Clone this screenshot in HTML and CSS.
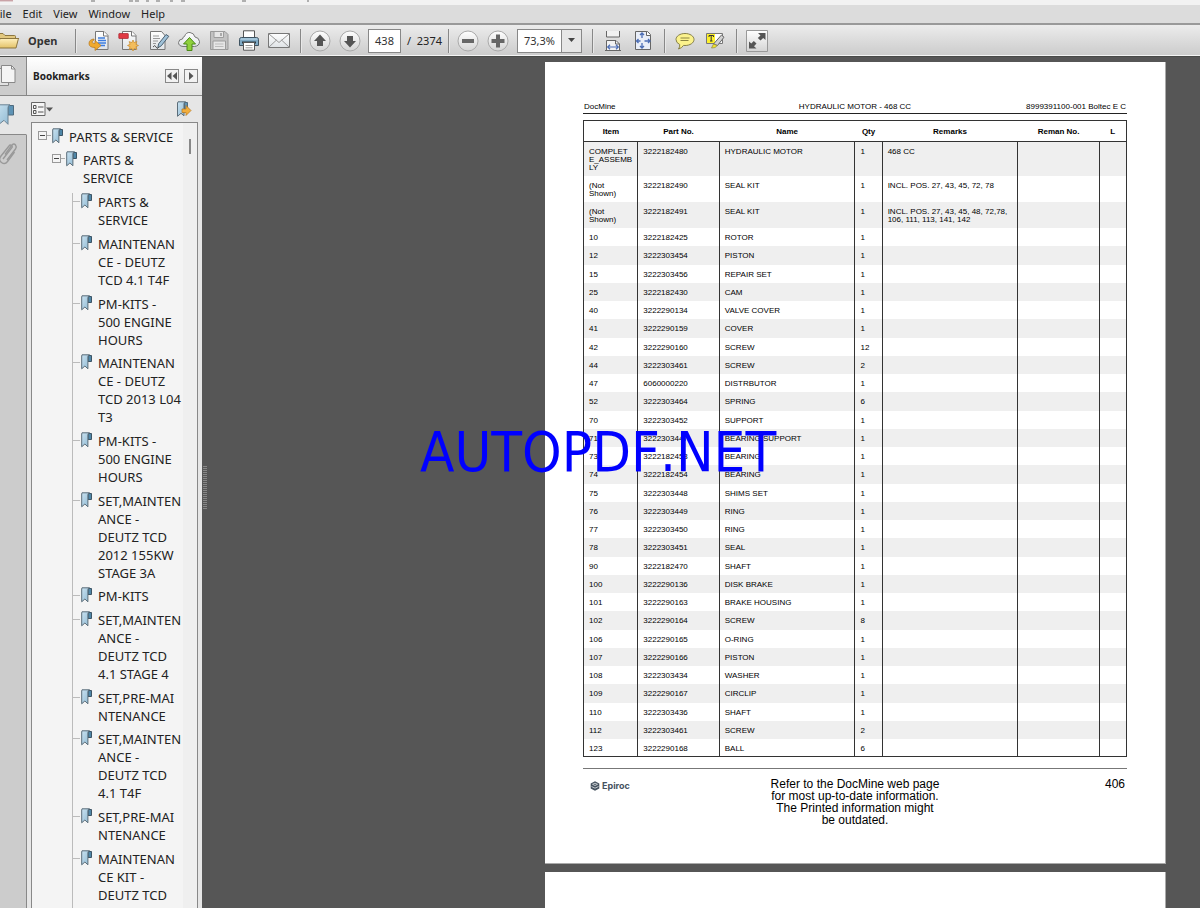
FILE: index.html
```html
<!DOCTYPE html>
<html lang="en">
<head>
<meta charset="utf-8">
<title>PDF viewer</title>
<link rel="stylesheet" href="styles.css">
</head>
<body>
<svg class="defs" aria-hidden="true">
  <defs>
    <linearGradient id="blue" x1="0" y1="0" x2="1" y2="1"><stop offset="0" stop-color="#c9e2f0"/><stop offset="1" stop-color="#8fb9d3"/></linearGradient>
    <linearGradient id="paper" x1="0" y1="0" x2="0" y2="1"><stop offset="0" stop-color="#fff"/><stop offset="1" stop-color="#dfe3e6"/></linearGradient>
    <linearGradient id="knob" x1="0" y1="0" x2="0" y2="1"><stop offset="0" stop-color="#fff"/><stop offset="1" stop-color="#d4d4d4"/></linearGradient>
    <linearGradient id="gold" x1="0" y1="0" x2="0" y2="1"><stop offset="0" stop-color="#fff0bd"/><stop offset="1" stop-color="#e3c268"/></linearGradient>
    <symbol id="mark" viewBox="0 0 12 16">
      <path d="M8 1.500h3.500v6H8z" fill="#4f87a8" stroke="#3d5566"/>
      <path d="M2 .8h7.500q-1.600.4-1.600 2v12L4.900 12l-3.200 2.800V2z" fill="url(#blue)" stroke="#5b6d79"/>
    </symbol>
  </defs>
</svg>
<div class="app">
  <div class="titlebar" aria-hidden="true">
    <svg width="320" height="5"><path d="M0 .8h13" stroke="#b98288"/><path d="M91 1h4M129 1h4m2 0h4m7 0h3m7 0h4m10 0h3m8 0h4m57 0h4M308 0v2" stroke="#999" stroke-width="1.500"/></svg>
  </div>
  <nav class="menubar" aria-label="Main">
    <button>File</button><button>Edit</button><button>View</button><button>Window</button><button>Help</button>
  </nav>
  <div class="toolbar">
    <button class="open"><svg width="20" height="20" viewBox="0 0 20 20"><path d="M-6 16V3.500q0-1 1-1H3l2 2h9.500q1 0 1 1V16z" fill="#e2c87f" stroke="#8d7740"/><path d="M-3 17L0 7.500h19q-.5 0-.8 1L16 17z" fill="url(#gold)" stroke="#8d7740"/></svg><span>Open</span></button>
    <span class="sep"></span>
    <button class="tool" aria-label="Convert"><svg viewBox="0 0 22 22"><path d="M7.500 1.500h8.500l4 4v14H7.500z" fill="url(#paper)" stroke="#777"/><path d="M15.500 1.500V6H20" fill="#fff" stroke="#777"/><path d="M10 8h7M10 10.500h8M10 13h8M11 15.500h6" stroke="#3d7de0" stroke-width="1.500"/><path d="M6 9q-5 .5-5 4.500 0 4 6 4v3l6-5-6-5v3q-3 0-3-1.500Q4 11 6 10z" fill="#f0a92d" stroke="#b5761b" stroke-width=".7"/></svg></button>
    <button class="tool" aria-label="Create PDF"><svg viewBox="0 0 22 22"><path d="M4.500 1.500h9.500l4 4v14H4.500z" fill="url(#paper)" stroke="#777"/><path d="M13.500 1.500V6H18" fill="#fff" stroke="#777"/><rect x=".8" y="3.500" width="9.500" height="5" rx=".5" fill="#e03a44" stroke="#a8242f" stroke-width=".7"/><path d="M15 10l1.200 2.600 2.700-1-1 2.700 2.600 1.200-2.600 1.200 1 2.700-2.700-1L15 21l-1.200-2.600-2.700 1 1-2.700-2.600-1.200 2.600-1.200-1-2.700 2.700 1z" fill="#f3bd5c" stroke="#c88a2b" stroke-width=".7"/></svg></button>
    <button class="tool" aria-label="Sign"><svg viewBox="0 0 22 22"><path d="M2.500 1.500h11l3.500 4v14H2.500z" fill="url(#paper)" stroke="#777"/><path d="M5 6h6M5 8.500h7M5 11h5M5 13.500h3" stroke="#999"/><path d="M18 4.500l2.800 1.800-7.500 9.500-3.500 2 .8-4z" fill="#9fc1d8" stroke="#4b6172"/><path d="M5 17q2-3 3 0t3 0" fill="none" stroke="#555"/></svg></button>
    <button class="tool" aria-label="Upload"><svg viewBox="0 0 22 22"><path d="M5 16.500Q.5 16 .5 12.500 1 9 4.500 9 4.500 7 6.500 6.500 8 2 12 2.500q4 .5 5 4.500 4 .5 4.500 4.500 0 4.500-5 5z" fill="url(#paper)" stroke="#777"/><path d="M11.500 7.500l6 6.500h-3.500v6.500h-5V14H5.500z" fill="#8fd03c" stroke="#4b8a17"/></svg></button>
    <button class="tool" aria-label="Save"><svg viewBox="0 0 22 22"><path d="M2.500 1.500h14.500l3 3v15H2.500z" fill="#c2c2c2" stroke="#999"/><path d="M6 1.500h9.500v6H6zM5 11h12.500v8.500H5z" fill="#e6e6e6" stroke="#9c9c9c"/><path d="M12 3h2v3h-2z" fill="#aaa"/><path d="M7 14h8.500M7 16.500h8.500" stroke="#bbb"/></svg></button>
    <button class="tool" aria-label="Print"><svg viewBox="0 0 22 22"><path d="M5.500 8V.8h11V8" fill="#fff" stroke="#555"/><path d="M1.500 15.500v-6q0-2 2-2h15q2 0 2 2v6z" fill="#7fa9c4" stroke="#3f5361"/><path d="M2.500 9h17" stroke="#c7deec"/><path d="M4 12.500h14" stroke="#2b3942" stroke-width="2"/><path d="M5.500 12.500h11v7.700h-11z" fill="#fff" stroke="#555"/><path d="M7.500 15.500h7M7.500 17.800h7" stroke="#999"/></svg></button>
    <button class="tool" aria-label="Email"><svg viewBox="0 0 22 22"><path d="M.5 3.500h21v14H.5z" fill="url(#paper)" stroke="#777"/><path d="M.5 17.500l8-7.500M21.500 17.500l-8-7.500M1 4l10 8.500L21 4" fill="none" stroke="#999"/></svg></button>
    <span class="sep"></span>
    <button class="tool" aria-label="Previous page"><svg viewBox="0 0 22 22"><circle cx="11" cy="11" r="10" fill="url(#knob)" stroke="#aaa"/><path d="M11 4.500l6 6.500h-3v5H8v-5H5z" fill="#555"/></svg></button>
    <button class="tool" aria-label="Next page"><svg viewBox="0 0 22 22"><circle cx="11" cy="11" r="10" fill="url(#knob)" stroke="#aaa"/><path d="M11 17.500l6-6.500h-3V6H8v5H5z" fill="#555"/></svg></button>
    <input class="pageno" aria-label="Page" value="438"><span class="total">/&nbsp; 2374</span>
    <span class="sep"></span>
    <button class="tool" aria-label="Zoom out"><svg viewBox="0 0 22 22"><circle cx="11" cy="11" r="10" fill="url(#knob)" stroke="#aaa"/><path d="M5 9h12v4H5z" fill="#666"/></svg></button>
    <button class="tool" aria-label="Zoom in"><svg viewBox="0 0 22 22"><circle cx="11" cy="11" r="10" fill="url(#knob)" stroke="#aaa"/><path d="M4.500 9H9V4.500h4V9h4.500v4H13v4.500H9V13H4.500z" fill="#666"/></svg></button>
    <div class="combo"><input aria-label="Zoom level" value="73,3%"><button aria-label="Zoom levels"><svg width="8" height="5"><path d="M0 0h7L3.500 4z" fill="#444"/></svg></button></div>
    <span class="sep"></span>
    <button class="tool" aria-label="Fit width"><svg viewBox="0 0 22 22"><path d="M4.500 1v6h13V1M4.500 20.500v-10H14l3.500 3.500v6.500" fill="#f2f2f2" stroke="#666"/><path d="M13.500 10.500V14h4" fill="none" stroke="#666"/><path d="M5.500 17h11M8 14.800L5.700 17 8 19.200M14 14.800l2.300 2.200-2.300 2.200" fill="none" stroke="#4b6db5" stroke-width="1.200"/><path d="M3 20.500h16" stroke="#666"/></svg></button>
    <button class="tool" aria-label="Fit page"><svg viewBox="0 0 22 22"><path d="M3.500 1.500h12l3 3v15h-15z" fill="#e9eef8" stroke="#666"/><path d="M14.500 1.500v4h4" fill="#fff" stroke="#666"/><path d="M10 3v5M10 13v5M4.500 11h4M12.500 11H18M8 5l2-2 2 2M8 16l2 2 2-2M6.500 9l-2 2 2 2M16 9l2 2-2 2" fill="none" stroke="#4b6db5" stroke-width="1.300"/></svg></button>
    <span class="sep"></span>
    <button class="tool" aria-label="Comment"><svg viewBox="0 0 22 22"><path d="M11 3.500c5 0 9 2.600 9 6s-4 6-9 6l-1.500-.1Q8 18 4.500 19q1.500-2 1.200-4.500Q2 12.800 2 9.500c0-3.400 4-6 9-6z" fill="#fbf28c" stroke="#857f49"/><path d="M6.500 8h9M6.500 10.500h8" stroke="#8b8442"/></svg></button>
    <button class="tool" aria-label="Highlight"><svg viewBox="0 0 22 22"><path d="M2.500 3.500h16v10h-16z" fill="#fff" stroke="#777"/><path d="M3 4h8v9H3z" fill="#fdf02c"/><path d="M5 7V5.500h4.500V7M7.200 5.500V11M6 11h2.500" fill="none" stroke="#333"/><path d="M17.500 5l2.500 2.200-6.500 8.300-4-1.500z" fill="#d2d2d2" stroke="#666"/><path d="M9.500 14l3.800 1.600-2.300 2-3.500.4z" fill="#f3e32b" stroke="#8b8442" stroke-width=".7"/></svg></button>
    <span class="sep"></span>
    <button class="tool" aria-label="Read mode"><svg viewBox="0 0 22 22"><path d="M.5.500h21v21H.5z" fill="url(#knob)" stroke="#999"/><path d="M12 3h7.500v7l-2.300-2-2.700 2.500L11.800 8l2.700-2.600zM10.500 18.500H3v-7l2.300 2L7.800 11l2.700 2.600-2.500 2.600z" fill="#555"/></svg></button>
  </div>
  <div class="workspace">
    <aside class="rail">
      <button class="thumbs" aria-label="Page thumbnails"><svg width="18" height="24" viewBox="0 0 18 24"><path d="M-2 4.500h10.500v17H-2z" fill="#e2e2e2" stroke="#888"/><path d="M1.500 1.500h10l3.500 3.500v13.500H1.500z" fill="#f4f4f4" stroke="#888"/><path d="M11.500 1.500V5H15" fill="none" stroke="#888"/></svg></button>
      <button class="marks" aria-label="Bookmarks"><svg width="15" height="22" viewBox="0 0 15 22"><path d="M8 1.500h5.500v9.500H8z" fill="#5e93b5" stroke="#4f6b7e"/><path d="M-4 .8H10q-2 .5-2 3v16.500l-4-4-5 4z" fill="url(#blue)" stroke="#6b8394"/></svg></button>
      <button class="clips" aria-label="Attachments"><svg width="18" height="24" viewBox="0 0 18 24"><g fill="none" stroke="#999" stroke-width="1.400"><path d="M3 17L11.500 6q1.500-1.500 0-2.500t-2.500.5L1 14q-3 4 .5 6.500t6-1L14.500 10"/><path d="M5 12.500L12 3q2-2 3.500 0t0 4L7 18"/></g></svg></button>
    </aside>
    <section class="panel">
      <header><h2>Bookmarks</h2><button aria-label="Collapse"><svg width="12" height="10"><path d="M5.500 1v8L1 5zM11 1v8L6.500 5z" fill="#555"/></svg></button><button aria-label="Next"><svg width="12" height="10"><path d="M4 1v8l4.500-4z" fill="#555"/></svg></button></header>
      <div class="paneltools">
        <button aria-label="Options"><svg width="22" height="15" viewBox="0 0 22 15"><path d="M.5.500h13.500v13H.5z" fill="#f5f5f5" stroke="#666"/><path d="M2.500 3.500h2.500v3H2.500zM2.500 8.500h2.500v3H2.500zM7 5h5.500M7 10h5.500" fill="none" stroke="#555"/><path d="M15 5.500h7l-3.500 4z" fill="#555"/></svg></button>
        <button aria-label="Locate bookmark"><svg width="16" height="17" viewBox="0 0 16 17"><path d="M8.500 1.500h3v7h-3z" fill="#5e93b5" stroke="#4f6b7e"/><path d="M2 .8h7.500q-1.500.5-1.500 2v12l-3-2.500-3.500 3V2z" fill="url(#blue)" stroke="#5b6d79"/><path d="M6 8h4V4.500l5 5-5 5V11.500H6z" fill="#f2ae3c" stroke="#b5761b" stroke-width=".7"/></svg></button>
      </div>
      <div class="treebox">
        <ul class="tree">
          <li><div class="node root"><button class="toggle" aria-label="Collapse"></button><svg class="mark"><use href="#mark"/></svg><a href="#p">PARTS &amp; SERVICE</a></div>
            <ul class="level1">
              <li><div class="node"><button class="toggle" aria-label="Collapse"></button><svg class="mark"><use href="#mark"/></svg><a href="#p">PARTS &amp;<br>SERVICE</a></div>
                <ul class="level2">
                  <li class="node"><svg class="mark"><use href="#mark"/></svg><a href="#p">PARTS &amp;<br>SERVICE</a></li>
                  <li class="node"><svg class="mark"><use href="#mark"/></svg><a href="#p">MAINTENAN<br>CE - DEUTZ<br>TCD 4.1 T4F</a></li>
                  <li class="node"><svg class="mark"><use href="#mark"/></svg><a href="#p">PM-KITS -<br>500 ENGINE<br>HOURS</a></li>
                  <li class="node"><svg class="mark"><use href="#mark"/></svg><a href="#p">MAINTENAN<br>CE - DEUTZ<br>TCD 2013 L04<br>T3</a></li>
                  <li class="node"><svg class="mark"><use href="#mark"/></svg><a href="#p">PM-KITS -<br>500 ENGINE<br>HOURS</a></li>
                  <li class="node"><svg class="mark"><use href="#mark"/></svg><a href="#p">SET,MAINTEN<br>ANCE -<br>DEUTZ TCD<br>2012 155KW<br>STAGE 3A</a></li>
                  <li class="node"><svg class="mark"><use href="#mark"/></svg><a href="#p">PM-KITS</a></li>
                  <li class="node"><svg class="mark"><use href="#mark"/></svg><a href="#p">SET,MAINTEN<br>ANCE -<br>DEUTZ TCD<br>4.1 STAGE 4</a></li>
                  <li class="node"><svg class="mark"><use href="#mark"/></svg><a href="#p">SET,PRE-MAI<br>NTENANCE</a></li>
                  <li class="node"><svg class="mark"><use href="#mark"/></svg><a href="#p">SET,MAINTEN<br>ANCE -<br>DEUTZ TCD<br>4.1 T4F</a></li>
                  <li class="node"><svg class="mark"><use href="#mark"/></svg><a href="#p">SET,PRE-MAI<br>NTENANCE</a></li>
                  <li class="node"><svg class="mark"><use href="#mark"/></svg><a href="#p">MAINTENAN<br>CE KIT -<br>DEUTZ TCD</a></li>
                </ul>
              </li>
            </ul>
          </li>
        </ul>
        <div class="scroll"><span></span></div>
      </div>
    </section>
    <main class="viewer">
      <div class="grip"></div>
      <div class="pages">
        <article class="page" id="p">
          <header class="pagehead"><span>DocMine</span><span>HYDRAULIC MOTOR - 468 CC</span><span class="num">8999391100-001 Boltec E C</span></header>
          <table class="parts">
            <colgroup><col class="c10"><col class="c15"><col class="c25"><col class="c5"><col class="c25"><col class="c15"><col class="c5"></colgroup>
            <thead><tr><th>Item<th>Part No.<th>Name<th>Qty<th>Remarks<th>Reman No.<th>L</thead>
            <tbody>
            <tr class="three"><td>COMPLET<br>E_ASSEMB<br>LY<td>3222182480<td>HYDRAULIC MOTOR<td>1<td>468 CC<td><td>
            <tr class="two"><td>(Not<br>Shown)<td>3222182490<td>SEAL KIT<td>1<td>INCL. POS. 27, 43, 45, 72, 78<td><td>
            <tr class="two"><td>(Not<br>Shown)<td>3222182491<td>SEAL KIT<td>1<td>INCL. POS. 27, 43, 45, 48, 72,78,<br>106, 111, 113, 141, 142<td><td>
            <tr><td>10<td>3222182425<td>ROTOR<td>1<td><td><td>
            <tr><td>12<td>3222303454<td>PISTON<td>1<td><td><td>
            <tr><td>15<td>3222303456<td>REPAIR SET<td>1<td><td><td>
            <tr><td>25<td>3222182430<td>CAM<td>1<td><td><td>
            <tr><td>40<td>3222290134<td>VALVE COVER<td>1<td><td><td>
            <tr><td>41<td>3222290159<td>COVER<td>1<td><td><td>
            <tr><td>42<td>3222290160<td>SCREW<td>12<td><td><td>
            <tr><td>44<td>3222303461<td>SCREW<td>2<td><td><td>
            <tr><td>47<td>6060000220<td>DISTRBUTOR<td>1<td><td><td>
            <tr><td>52<td>3222303464<td>SPRING<td>6<td><td><td>
            <tr><td>70<td>3222303452<td>SUPPORT<td>1<td><td><td>
            <tr><td>71<td>3222303447<td>BEARING SUPPORT<td>1<td><td><td>
            <tr><td>73<td>3222182453<td>BEARING<td>1<td><td><td>
            <tr><td>74<td>3222182454<td>BEARING<td>1<td><td><td>
            <tr><td>75<td>3222303448<td>SHIMS SET<td>1<td><td><td>
            <tr><td>76<td>3222303449<td>RING<td>1<td><td><td>
            <tr><td>77<td>3222303450<td>RING<td>1<td><td><td>
            <tr><td>78<td>3222303451<td>SEAL<td>1<td><td><td>
            <tr><td>90<td>3222182470<td>SHAFT<td>1<td><td><td>
            <tr><td>100<td>3222290136<td>DISK BRAKE<td>1<td><td><td>
            <tr><td>101<td>3222290163<td>BRAKE HOUSING<td>1<td><td><td>
            <tr><td>102<td>3222290164<td>SCREW<td>8<td><td><td>
            <tr><td>106<td>3222290165<td>O-RING<td>1<td><td><td>
            <tr><td>107<td>3222290166<td>PISTON<td>1<td><td><td>
            <tr><td>108<td>3222303434<td>WASHER<td>1<td><td><td>
            <tr><td>109<td>3222290167<td>CIRCLIP<td>1<td><td><td>
            <tr><td>110<td>3222303436<td>SHAFT<td>1<td><td><td>
            <tr><td>112<td>3222303461<td>SCREW<td>2<td><td><td>
            <tr><td>123<td>3222290168<td>BALL<td>6<td><td><td>
            </tbody>
          </table>
          <footer class="pagefoot">
            <span class="brand"><svg width="10" height="10" viewBox="0 0 10 10"><path d="M5 .3l4.300 2.200v5L5 9.700.7 7.500v-5z" fill="#46525f"/><path d="M2.500 3.300L5 2.200l2.500 1.100L5 4.500zM1.500 5.500L5 7.200l3.500-1.700" fill="none" stroke="#dfe3e6" stroke-width=".8"/></svg>Epiroc</span>
            <p>Refer to the DocMine web page<br>for most up-to-date information.<br>The Printed information might<br>be outdated.</p>
            <span class="num">406</span>
          </footer>
        </article>
        <article class="page"></article>
      </div>
    </main>
  </div>
  <div class="watermark">AUTOPDF.NET</div>
</div>
</body>
</html>
```
FILE: styles.css
```css
* { box-sizing: border-box; }
body { margin: 0; font-family: "Noto Sans", "Open Sans", sans-serif; font-size: 11px; color: #222; }
button { border: 0; padding: 0; background: none; font: inherit; color: inherit; display: flex; align-items: center; justify-content: center; }
input { font: inherit; color: #333; border: 0; padding: 0; min-width: 0; text-align: center; background: #fff; }
svg { display: block; flex: none; }
h2, p, ul { margin: 0; padding: 0; list-style: none; }
a { color: inherit; text-decoration: none; }
.defs { position: absolute; width: 0; height: 0; }

.app { position: relative; height: 100vh; display: flex; flex-direction: column; overflow: hidden; background: #565656; }
.titlebar { height: 5px; background: #f2f2f2; flex: none; }
.menubar { height: 20px; flex: none; display: flex; gap: 11px; margin-left: -6px; padding-bottom: 1px; background: #dcdcdc; border-bottom: 2px solid #999; }
.toolbar { height: 32px; flex: none; display: flex; align-items: center; background: linear-gradient(#ececec, #cbcbcb); border-bottom: 1px solid #484a48; box-shadow: inset 0 -1px #f4f4f4; }
.open { gap: 8px; font-weight: bold; width: 68px; justify-content: flex-start; color: #333; }
.sep { width: 2px; height: 24px; margin: 0 3px 0 6px; background: linear-gradient(90deg, #888 50%, #e8e8e8 50%); }
.open + .sep { margin: 0 7px; }
.combo ~ .sep { margin-right: 4px; }
.tool { width: 30px; height: 30px; }
.tool svg { width: 22px; height: 22px; }
.pageno { width: 33px; height: 24px; margin-left: 3px; border: 1px solid #888; }
.total { margin-left: 6px; width: 35px; white-space: nowrap; }
.combo { display: flex; width: 65px; height: 24px; margin: 0 4px; border: 1px solid #888; }
.combo input { flex: 1; }
.combo button { width: 20px; border-left: 1px solid #888; background: #e6e6e6; }

.workspace { flex: 1; min-height: 0; display: flex; }
.rail { width: 27px; flex: none; display: flex; flex-direction: column; background: #ccc; }
.rail button { justify-content: flex-start; border-right: 1px solid #888; }
.rail .thumbs { height: 39px; border-bottom: 1px solid #888; }
.rail .marks { height: 39px; background: #e6e6e6; border-right-color: #e6e6e6; border-bottom: 1px solid #888; }
.rail .clips { flex: 1; align-items: flex-start; padding-top: 7px; }
.panel { width: 175px; flex: none; display: flex; flex-direction: column; background: #e6e6e6; }
.panel header { height: 39px; flex: none; display: flex; align-items: center; gap: 5px; padding: 0 4px 0 6px; background: linear-gradient(#fff, #e2e2e2); border-bottom: 1px solid #888; }
.panel h2 { flex: 1; font-weight: bold; font-size: 10px; color: #222; }
.panel header button { width: 14px; height: 14px; border: 1px solid #888; background: #f2f2f2; }
.paneltools { height: 26px; flex: none; display: flex; justify-content: space-between; align-items: center; padding: 0 10px 0 4px; }
.treebox { flex: 1; min-height: 0; display: flex; margin: 0 4px; overflow: hidden; border: 1px solid #888; border-bottom: 0; background: #f4f4f4; }
.tree { flex: 1; padding: 5px 0 0 6px; font-size: 13px; line-height: 18px; white-space: nowrap; }
.scroll { width: 14px; flex: none; background: #efefef; }
.scroll span { display: block; width: 2px; height: 15px; margin: 16px 0 0 6px; background: #888; }
.node { display: flex; margin-bottom: 6px; }
.root, .node:nth-child(3n) { margin-bottom: 5px; }
.mark { width: 12px; height: 16px; margin-right: 6px; }
.toggle { width: 13px; height: 16px; background:
  linear-gradient(#444, #444) 2px 7px / 5px 1px no-repeat,
  linear-gradient(#f4f4f4, #f4f4f4) 1px 4px / 7px 7px no-repeat,
  linear-gradient(#999, #999) 0 3px / 9px 9px no-repeat,
  linear-gradient(#aaa, #aaa) 9px 7px / 4px 1px no-repeat; }
.level1 { margin-left: 14px; }
.level2 { margin-left: 20px; padding-bottom: 6px; border-left: 1px solid #bbb; }
.level2 .node::before { content: ""; width: 7px; height: 8px; border-bottom: 1px solid #bbb; }

.viewer { flex: 1; min-width: 0; display: flex; overflow: hidden; background: #565656; }
.grip { width: 4px; height: 44px; margin: 409px 0 0 1px; flex: none; background: repeating-linear-gradient(#888 0 1px, #565656 1px 2px); }
.pages { flex: 1; display: flex; flex-direction: column; gap: 8px; padding: 5px 34px 0 338px; }
.page { flex: none; min-height: 200px; padding: 39px 38px 37px; background: #fff; font-family: "Liberation Sans", Arial, sans-serif; font-size: 8px; color: #000; border: 1px solid #aaa; border-width: 0 1px 1px 0; }
.pagehead { display: grid; grid-template-columns: 1fr auto 1fr; padding: 0 1px; line-height: 12px; border-bottom: 1px solid #222; margin-bottom: 6px; }
.parts { width: 100%; table-layout: fixed; border-collapse: collapse; border: 1px solid #333; line-height: 8px; }
.c5 { width: 5%; } .c10 { width: 10%; } .c15 { width: 15%; } .c25 { width: 25%; }
.parts th { height: 21px; padding: 2px 0 0; border-bottom: 1px solid #333; }
.parts td { height: 18px; padding: 6px 0 0 5px; vertical-align: top; border-left: 1px solid #333; white-space: nowrap; }
.parts tr:nth-child(4n+1) td { height: 19px; }
.parts tbody tr.three td { height: 34px; }
.parts tr.two td { height: 26px; }
.parts tbody tr:nth-child(odd) { background: #efefef; }
.pagefoot { display: grid; grid-template-columns: 1fr auto 1fr; align-items: start; margin-top: 11px; padding: 9px 2px 0; border-top: 1px solid #777; font-size: 12px; line-height: 12px; }
.pagefoot p { text-align: center; }
.num { text-align: right; }
.brand { display: flex; align-items: center; gap: 2px; padding: 2px 0 0 5px; font-family: Inter, sans-serif; font-weight: bold; font-size: 9px; color: #46525f; }
.watermark { position: absolute; left: 420px; top: 420px; font-family: "DejaVu Sans Condensed", "DejaVu Sans", sans-serif; font-kerning: none; font-size: 56px; line-height: 64px; color: #00f; }
```
